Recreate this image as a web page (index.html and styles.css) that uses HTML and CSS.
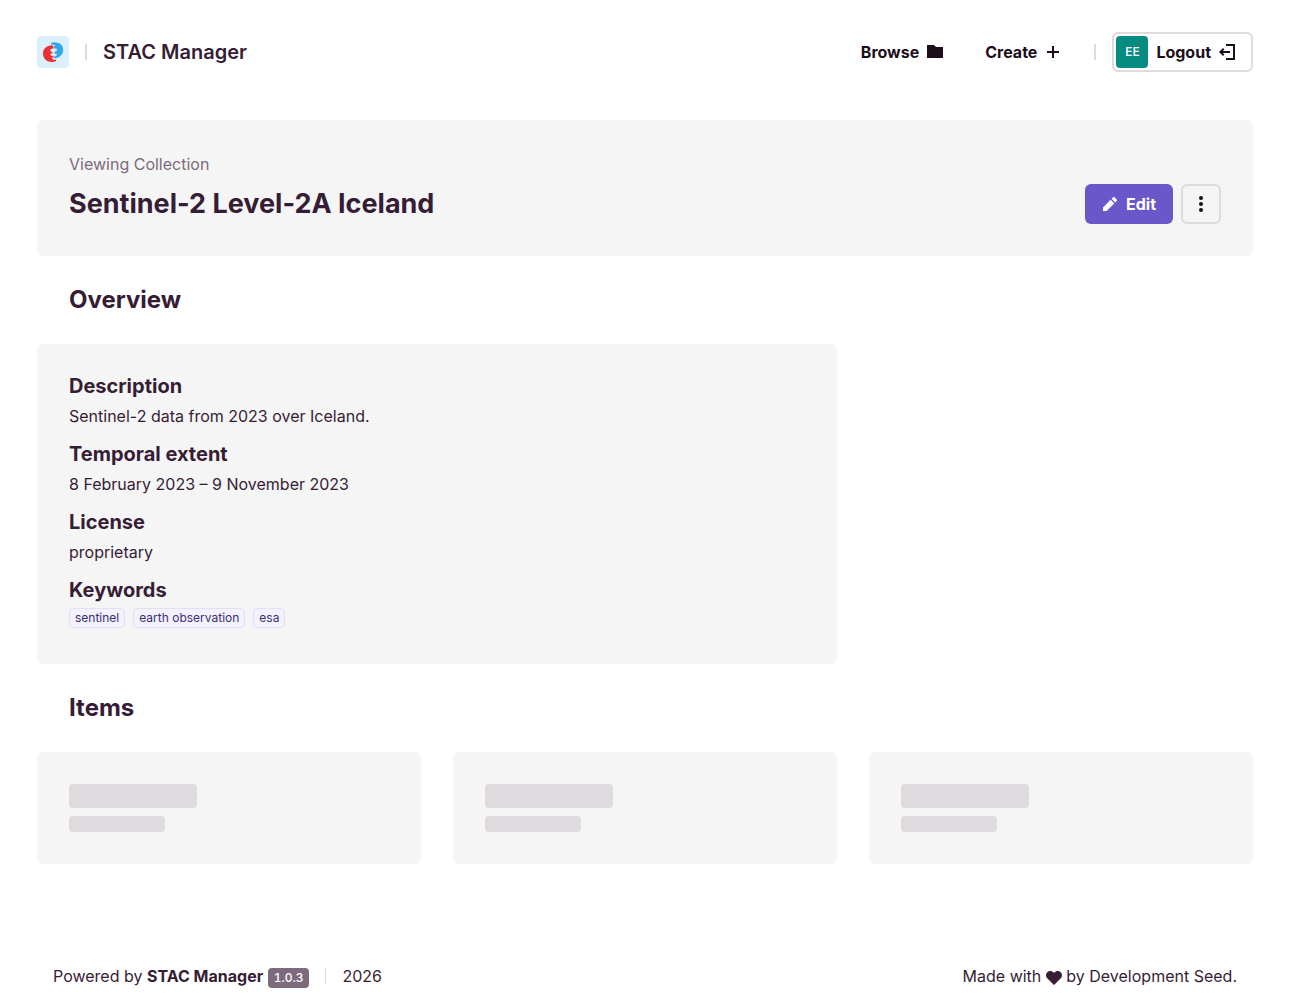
FILE: index.html
```html
<!DOCTYPE html>
<html lang="en">
<head>
  <meta charset="UTF-8">
  <meta name="viewport" content="width=device-width, initial-scale=1.0">
  <title>Sentinel-2 Level-2A Iceland | STAC Manager</title>
  <link rel="stylesheet" href="styles.css">
</head>
<body>
  <div class="page">
    <!-- Header -->
    <header class="page-header">
      <a href="#" class="brand">
        <svg class="logo" viewBox="0 0 32 32" aria-hidden="true">
          <rect width="32" height="32" rx="4" fill="#dbf0fb"/>
          <path fill="#2ea8ea" d="M14 7c2-1.300 8-1 10.500 2 3 4 1.500 9-1 11-2 1.600-4 2.300-6.500 2.300V20.500c2.200 0 3.500-1.200 2.500-2.800h-2v-2.200c2.600 0 3.400-2 1.500-3h-2v-2c2-.2 1.500-2-3-2z"/>
          <path fill="#eb2f36" d="M15 9.300c-5.500.2-9 3.700-9 8.200 0 5 4 8.500 9 8.500 1.500 0 3-.3 4-1v-1.200c-3 0-4.200-.8-3.700-2.300h1.200v-1.500c-2.300 0-3.500-.7-3-2.500h2v-1.500c-2.600-.4-3-2.500-.5-3.500h1.500v-1.500c0-1-.5-1.700-1.500-1.700z"/>
        </svg>
        <span class="divider"></span>
        <strong class="brand-name">STAC Manager</strong>
      </a>

      <nav class="main-nav">
        <div class="nav-links">
          <a href="#" class="button">
            Browse
            <svg class="icon" viewBox="0 0 16 16" aria-hidden="true"><path d="M0 1h7l2 2h7v11H0z"/></svg>
          </a>
          <a href="#" class="button">
            Create
            <svg class="icon" viewBox="0 0 16 16" aria-hidden="true"><path d="M7 2h2v5h5v2H9v5H7V9H2V7h5z"/></svg>
          </a>
        </div>
        <span class="divider"></span>
        <button type="button" class="button button-outline button-user">
          <span class="avatar">EE</span>
          Logout
          <svg class="icon" viewBox="0 0 16 16" aria-hidden="true"><path d="M7 0h9v16H7v-2h7V2H7zM4 4l1.400 1.400L3.800 7H11v2H3.800l1.600 1.600L4 12 0 8z"/></svg>
        </button>
      </nav>
    </header>

    <main>
      <!-- Collection title -->
      <div class="panel hero">
        <div>
          <p class="hero-label">Viewing Collection</p>
          <h1>Sentinel-2 Level-2A Iceland</h1>
        </div>
        <div class="hero-actions">
          <button type="button" class="button button-primary">
            <svg class="icon" viewBox="0 0 16 16" aria-hidden="true"><path d="M1 11.400V15h3.600l7.600-7.600-3.600-3.600zM9.600 2.800l1.500-1.500c.4-.4 1-.4 1.400 0l2.200 2.200c.4.4.4 1 0 1.400l-1.500 1.500z"/></svg>
            Edit
          </button>
          <button type="button" class="button button-outline button-icon" aria-label="More options">
            <svg class="icon" viewBox="0 0 16 16" aria-hidden="true"><circle cx="8" cy="2" r="2"/><circle cx="8" cy="8" r="2"/><circle cx="8" cy="14" r="2"/></svg>
          </button>
        </div>
      </div>

      <!-- Overview -->
      <section>
        <h2>Overview</h2>
        <div class="grid">
          <dl class="panel details">
            <div>
              <dt>Description</dt>
              <dd>Sentinel-2 data from 2023 over Iceland.</dd>
            </div>
            <div>
              <dt>Temporal extent</dt>
              <dd>8 February 2023 – 9 November 2023</dd>
            </div>
            <div>
              <dt>License</dt>
              <dd>proprietary</dd>
            </div>
            <div>
              <dt>Keywords</dt>
              <dd class="tags">
                <span class="tag">sentinel</span>
                <span class="tag">earth observation</span>
                <span class="tag">esa</span>
              </dd>
            </div>
          </dl>
        </div>
      </section>

      <!-- Items (loading) -->
      <section>
        <h2>Items</h2>
        <div class="grid">
          <div class="panel">
            <div class="skeleton skeleton-title"></div>
            <div class="skeleton skeleton-text"></div>
          </div>
          <div class="panel">
            <div class="skeleton skeleton-title"></div>
            <div class="skeleton skeleton-text"></div>
          </div>
          <div class="panel">
            <div class="skeleton skeleton-title"></div>
            <div class="skeleton skeleton-text"></div>
          </div>
        </div>
      </section>
    </main>

    <!-- Footer -->
    <footer class="page-footer">
      <div class="footer-info">
        <p>Powered by <strong>STAC Manager</strong> <span class="badge">1.0.3</span></p>
        <span class="divider divider-thin"></span>
        <p>2026</p>
      </div>
      <p>Made with <svg class="icon heart" viewBox="0 0 16 16" role="img" aria-label="love"><path d="M8 15 1.500 8.600C-.4 6.600-.4 3.800 1.300 2.200 3.100.500 6 .6 8 3c2-2.400 4.900-2.500 6.700-.8 1.700 1.600 1.700 4.400-.2 6.400z"/></svg> by <a href="#">Development Seed</a>.</p>
    </footer>
  </div>
</body>
</html>
```

FILE: styles.css
```css
/* General Styles */
* {
  box-sizing: border-box;
}

body {
  margin: 0;
  font-family: Inter, sans-serif;
  font-size: 16px;
  line-height: 24px;
  color: #361d36;
  background-color: #fff;
}

h1, h2, p, dl, dd {
  margin: 0;
}

a {
  color: inherit;
  text-decoration: none;
}

.page {
  display: flex;
  flex-direction: column;
  max-width: 1280px;
  min-height: 100vh;
  margin: 0 auto;
  padding: 0 32px;
}

.panel {
  padding: 32px;
  border-radius: 6px;
  background-color: #f5f5f5;
}

.grid {
  display: grid;
  grid-template-columns: repeat(3, 1fr);
  gap: 32px;
}

.divider {
  width: 2px;
  height: 16px;
  background-color: #dedadd;
}

.divider-thin {
  width: 1px;
}

.icon {
  width: 16px;
  height: 16px;
  flex-shrink: 0;
  fill: currentColor;
}

/* Buttons */
.button {
  display: inline-flex;
  align-items: center;
  gap: 8px;
  height: 40px;
  padding: 0 16px;
  border: 1px solid transparent;
  border-radius: 6px;
  font: inherit;
  font-weight: 700;
  color: #1b0e1b;
  background: none;
  cursor: pointer;
}

.button-primary {
  color: #fff;
  background-color: #6a58cb;
}

.button-outline {
  border: 2px solid #dedadd;
}

.button-icon {
  justify-content: center;
  width: 40px;
  padding: 0;
}

.button-user {
  padding-left: 2px;
}

.avatar {
  display: flex;
  align-items: center;
  justify-content: center;
  width: 32px;
  height: 32px;
  border-radius: 4px;
  font-size: 12px;
  font-weight: 500;
  color: #fff;
  background-color: #058b80;
}

/* Header */
.page-header {
  display: flex;
  align-items: center;
  justify-content: space-between;
  padding: 32px 0 48px;
}

.brand,
.main-nav {
  display: flex;
  align-items: center;
  gap: 16px;
}

.nav-links {
  display: flex;
  gap: 8px;
}

.logo {
  width: 32px;
  height: 32px;
}

.brand-name {
  font-size: 20px;
  font-weight: 600;
}

/* Collection title */
.hero {
  display: flex;
  align-items: flex-end;
  justify-content: space-between;
}

.hero-label {
  margin-bottom: 8px;
  color: #7d6b7d;
}

h1 {
  font-size: 27px;
  font-weight: 700;
  line-height: 40px;
}

.hero-actions {
  display: flex;
  gap: 8px;
}

h2 {
  padding: 32px;
  font-size: 24px;
  font-weight: 700;
  line-height: 24px;
}

/* Overview */
.details {
  display: flex;
  flex-direction: column;
  gap: 16px;
  grid-column: span 2;
}

dt {
  margin-bottom: 8px;
  font-size: 20px;
  font-weight: 700;
  line-height: 20px;
}

.tags {
  display: flex;
  gap: 8px;
  padding-bottom: 4px;
}

.tag {
  padding: 0 5px;
  border: 1px solid #e3dffa;
  border-radius: 4px;
  font-size: 12px;
  line-height: 18px;
  color: #3b2f75;
  background-color: #f3f1fc;
}

/* Loading placeholders */
.skeleton {
  border-radius: 4px;
  background-color: #dedadd;
}

.skeleton-title {
  width: 128px;
  height: 24px;
  margin-bottom: 8px;
}

.skeleton-text {
  width: 96px;
  height: 16px;
}

/* Footer */
.page-footer {
  display: flex;
  align-items: center;
  justify-content: space-between;
  margin-top: auto;
  padding: 32px 16px 16px;
}

.footer-info {
  display: flex;
  align-items: center;
  gap: 16px;
}

.badge {
  display: inline-block;
  padding: 0 6px;
  border-radius: 4px;
  font-size: 12px;
  font-weight: 500;
  font-variant-numeric: tabular-nums;
  line-height: 20px;
  vertical-align: bottom;
  color: #fff;
  background-color: #7d6b7d;
}

.heart {
  vertical-align: middle;
}
```
